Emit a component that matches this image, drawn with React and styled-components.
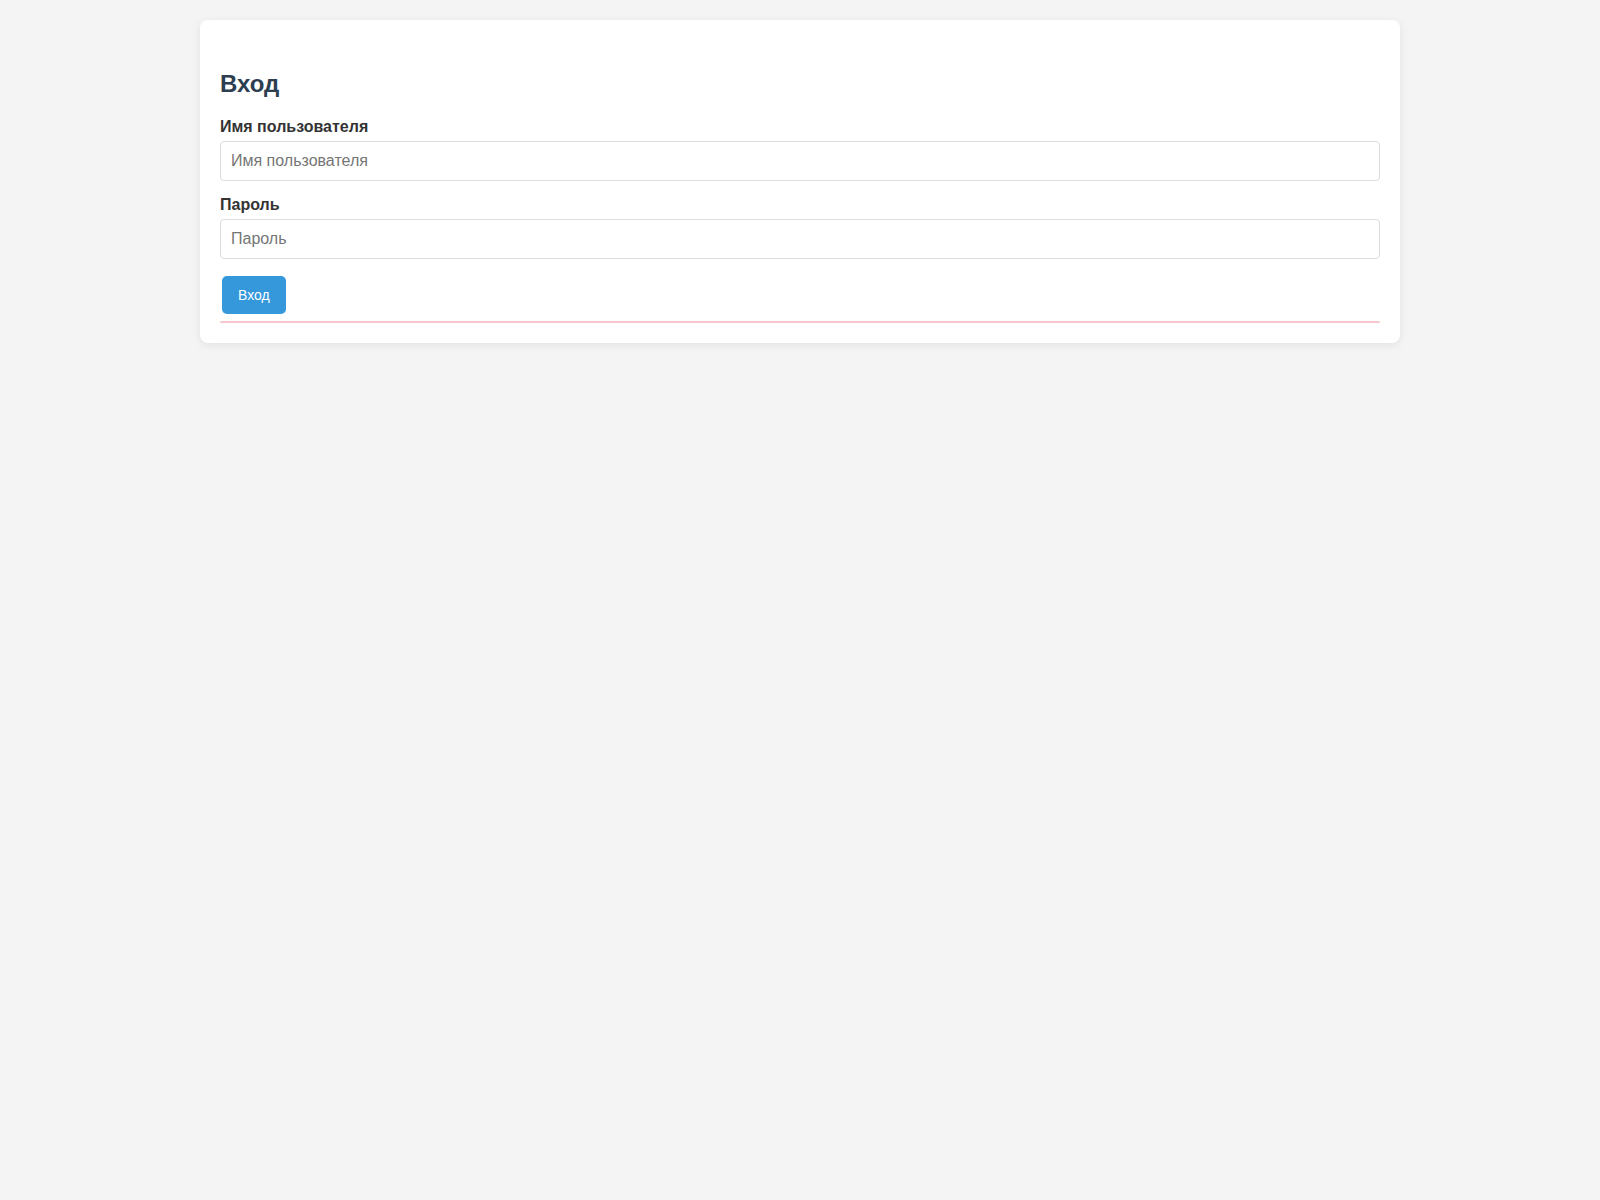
import styled, { createGlobalStyle } from 'styled-components';

/* Global -------------------*/
const GlobalStyle = createGlobalStyle`
    body {
        margin: 0;
        background: #f4f4f4;
        font-family: "Liberation Sans", Arial, sans-serif;
    }
    * { box-sizing: border-box; }
`;

const App = () => {
    return (
        <>
            <GlobalStyle />
            <LoginCard>
                <Title>Вход</Title>
                <form onSubmit={(e) => e.preventDefault()}>
                    <Field>
                        <Label htmlFor="username">Имя пользователя</Label>
                        <Input id="username" type="text" placeholder="Имя пользователя" />
                    </Field>
                    <Field>
                        <Label htmlFor="password">Пароль</Label>
                        <Input id="password" type="password" placeholder="Пароль" />
                    </Field>
                    <SubmitButton type="submit">Вход</SubmitButton>
                </form>
                <ErrorBox />
            </LoginCard>
        </>
    );
}

export default App;

const LoginCard = styled.div`
    max-width: 1200px;
    margin: 20px auto;
    padding: 20px;
    background: #fff;
    border-radius: 8px;
    box-shadow: 0 2px 10px rgba(0, 0, 0, 0.08);
`;

const Title = styled.h2`
    margin: 30px 0 20px;
    font-size: 24px;
    font-weight: bold;
    color: #2c3e50;
`;

const Field = styled.div`
    margin-bottom: 15px;
`;

const Label = styled.label`
    display: block;
    margin-bottom: 5px;
    font-size: 16px;
    font-weight: bold;
    color: #333;
`;

const Input = styled.input`
    display: block;
    width: 100%;
    height: 40px;
    padding: 0 10px;
    font-family: "Liberation Sans", Arial, sans-serif;
    font-size: 16px;
    color: #333;
    border: 1px solid #ddd;
    border-radius: 4px;
    outline: none;

    &::placeholder { color: #757575; }
`;

const SubmitButton = styled.button`
    display: block;
    margin: 17px 0 0 2px;
    height: 38px;
    padding: 0 16px;
    font-family: "Liberation Sans", Arial, sans-serif;
    font-size: 14px;
    color: #fff;
    background: #3498db;
    border: none;
    border-radius: 5px;
    cursor: pointer;
`;

const ErrorBox = styled.div`
    margin-top: 7px;
    background: #f8d7da;
    border: 1px solid #f5c6cb;
    border-radius: 2px;
`;
